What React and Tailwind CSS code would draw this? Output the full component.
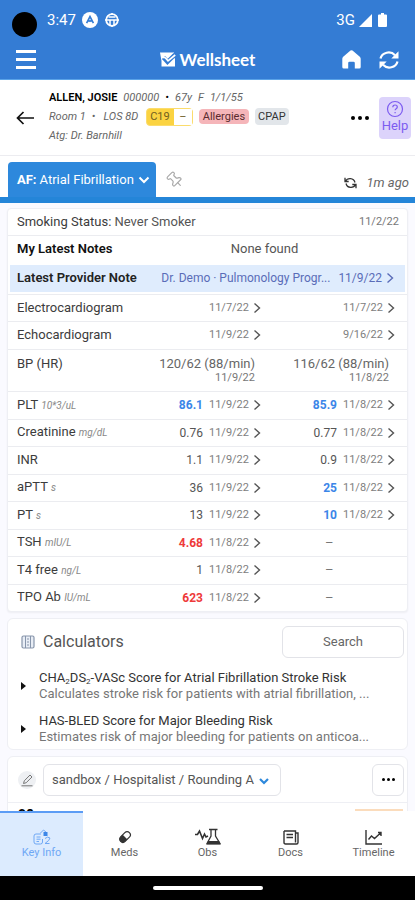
import { Pin } from "lucide-react";

const labs = [
  { name: "PLT", unit: "10*3/uL", a: ["86.1", "11/9/22", "low"], b: ["85.9", "11/8/22", "low"] },
  { name: "Creatinine", unit: "mg/dL", a: ["0.76", "11/9/22"], b: ["0.77", "11/8/22"] },
  { name: "INR", unit: "", a: ["1.1", "11/9/22"], b: ["0.9", "11/8/22"] },
  { name: "aPTT", unit: "s", a: ["36", "11/9/22"], b: ["25", "11/8/22", "low"] },
  { name: "PT", unit: "s", a: ["13", "11/9/22"], b: ["10", "11/8/22", "low"] },
  { name: "TSH", unit: "mIU/L", a: ["4.68", "11/8/22", "high"], b: null },
  { name: "T4 free", unit: "ng/L", a: ["1", "11/8/22"], b: null },
  { name: "TPO Ab", unit: "IU/mL", a: ["623", "11/8/22", "high"], b: null },
];

const calculators = [
  {
    title: (
      <>
        CHA<sub className="text-[8px]">2</sub>DS<sub className="text-[8px]">2</sub>-VASc Score for Atrial Fibrillation Stroke Risk
      </>
    ),
    text: "Calculates stroke risk for patients with atrial fibrillation, ...",
  },
  {
    title: "HAS-BLED Score for Major Bleeding Risk",
    text: "Estimates risk of major bleeding for patients on anticoa...",
  },
];

const flagColors = {
  low: "font-bold text-[#3b86e8]",
  high: "font-bold text-[#ee3a3a]",
};

function Chevron({ className = "" }) {
  return (
    <svg viewBox="0 0 8 12" className={`h-3 w-2 shrink-0 ${className}`} fill="none" stroke="currentColor" strokeWidth="1.4" aria-hidden="true">
      <path d="M1.5 1.5 6.5 6l-5 4.5" />
    </svg>
  );
}

function StatusBar() {
  return (
    <div className="flex h-10 items-center pl-3 pr-7">
      <span className="mt-2 size-[25px] rounded-full bg-black" />
      <span className="ml-2.5 text-[15px]">3:47</span>
      <svg viewBox="0 0 16 16" className="ml-1.5 size-4" aria-hidden="true">
        <circle cx="8" cy="8" r="8" fill="#fff" />
        <path d="M4.6 11.2 8 4.6l3.4 6.6M6.5 9.6 8 8.6l1.5 1" fill="none" stroke="#347cd4" strokeWidth="1.6" />
      </svg>
      <svg viewBox="0 0 16 16" className="ml-1.5 size-4" fill="none" stroke="#fff" aria-hidden="true">
        <circle cx="8" cy="8" r="5.8" strokeWidth="1.8" />
        <path d="M8 1v2M8 13v2M1 8h14M4.5 5h7M6 8v5M10 8v5" strokeWidth="1.5" />
      </svg>
      <span className="ml-auto text-[15px]">3G</span>
      <svg viewBox="0 0 13 13" className="ml-1 size-[13px]" fill="#fff" aria-hidden="true">
        <path d="M13 0v13H0z" />
      </svg>
      <svg viewBox="0 0 9 14" className="ml-1.5 h-3.5 w-[9px]" fill="#fff" aria-hidden="true">
        <path d="M3 0h3v1.5h2a1 1 0 0 1 1 1V13a1 1 0 0 1-1 1H1a1 1 0 0 1-1-1V2.5a1 1 0 0 1 1-1h2z" />
      </svg>
    </div>
  );
}

function TopBar() {
  return (
    <div className="grid h-[39px] grid-cols-[1fr_auto_1fr] items-center px-4">
      <button type="button" aria-label="Menu" className="flex w-5 flex-col gap-[5px]">
        <span className="h-[3px] bg-white" />
        <span className="h-[3px] bg-white" />
        <span className="h-[3px] bg-white" />
      </button>
      <div className="flex items-center gap-1">
        <svg viewBox="0 0 16 15" className="h-[15px] w-4" aria-hidden="true">
          <path d="M0 .5h14v4L15 7v7.500H1.500V9z" fill="#fff" />
          <path d="m3.500 5.500 4 4.500L15 2.500" fill="none" stroke="#347cd4" strokeWidth="4.200" />
          <path d="M3 5.800q1.800-1 3 .8L8 8.800 15.200 3" fill="none" stroke="#fff" strokeWidth="1.700" />
        </svg>
        <span className="font-[Lato] text-[17px] font-bold leading-5">Wellsheet</span>
      </div>
      <div className="flex items-center justify-end gap-[18px]">
        <button type="button" aria-label="Home">
          <svg viewBox="0 0 19 19" className="size-[19px]" aria-hidden="true">
            <path d="M8.500.6q1-.8 2 0l7.300 6.200q.9.8.9 2V17q0 1.500-1.500 1.500h-4.400V13q0-1.300-1.300-1.300h-4Q6.200 11.700 6.200 13v5.500H1.800Q.3 18.500.3 17V8.800q0-1.200.9-2z" fill="#fff" />
          </svg>
        </button>
        <button type="button" aria-label="Refresh">
          <svg viewBox="0 0 20 18" className="h-[18px] w-5" fill="none" stroke="#fff" strokeWidth="2.200" aria-hidden="true">
            <path d="M1.500 7.500A8.300 7.500 0 0 1 16 4.200M18.500 10.500A8.300 7.500 0 0 1 4 13.800" />
            <path d="M19.500.3v7.200h-7.200zM.5 17.700v-7.200h7.200z" fill="#fff" stroke="none" />
          </svg>
        </button>
      </div>
    </div>
  );
}

function PatientHeader() {
  return (
    <section className="flex h-[76px] shrink-0 items-center border-b border-[#ececf0] pl-4 pr-1">
      <button type="button" aria-label="Back">
        <svg viewBox="0 0 18 14" className="h-3.5 w-[18px]" fill="none" stroke="#111" strokeWidth="1.700" aria-hidden="true">
          <path d="M18 7H1.500M7.500 1l-6 6 6 6" />
        </svg>
      </button>
      <div className="mb-0.5 ml-[15px] text-[11px] italic leading-[19px] text-[#666]">
        <div className="flex whitespace-nowrap">
          <strong className="font-semibold not-italic text-black">ALLEN, JOSIE</strong>
          <span className="ml-1.5">000000</span>
          <span className="mx-1.5 text-black">•</span>
          <span>67y</span>
          <span className="ml-1.5">F</span>
          <span className="ml-1.5">1/1/55</span>
        </div>
        <div className="flex items-center whitespace-nowrap">
          <span>Room 1</span>
          <span className="ml-1.5">•</span>
          <span className="ml-2">LOS 8D</span>
          <span className="ml-2 flex h-[18px] items-center rounded-sm border border-[#fbdc6c] bg-[#fbd341] not-italic leading-4 text-[#70601f]">
            <span className="pl-[3px] pr-1">C19</span>
            <span className="flex h-4 w-[18px] items-center justify-center bg-white">–</span>
          </span>
          <span className="ml-1.5 rounded-sm bg-[#f5b5b9] px-1 not-italic leading-[15px] text-[#5a2a2e]">Allergies</span>
          <span className="ml-1.5 rounded-sm bg-[#e2e6ea] px-[3px] not-italic leading-[17px] text-[#333]">CPAP</span>
        </div>
        <p>Atg: Dr. Barnhill</p>
      </div>
      <button type="button" aria-label="More" className="ml-auto flex gap-[3px]">
        <span className="size-1 rounded-full bg-black" />
        <span className="size-1 rounded-full bg-black" />
        <span className="size-1 rounded-full bg-black" />
      </button>
      <button type="button" className="ml-2.5 flex h-[42px] w-8 flex-col items-center rounded bg-[#dcd3fb] pt-[3px] text-[13px] leading-4 text-[#7c5cf0]">
        <svg viewBox="0 0 18 18" className="size-[18px]" fill="none" stroke="currentColor" aria-hidden="true">
          <circle cx="9" cy="9" r="7.500" strokeWidth="1.200" />
          <path d="M6.800 7.200c0-3 4.500-2.800 4.500-.2 0 1.700-2.200 1.700-2.200 3.300M9.100 12v1.200" strokeWidth="1.200" />
        </svg>
        Help
      </button>
    </section>
  );
}

function ProblemTabs() {
  return (
    <nav className="flex h-[47px] shrink-0 items-end border-b-[6px] border-[#2485d8] pl-2 pr-1.5">
      <button type="button" className="flex h-[35px] w-[148px] items-center whitespace-nowrap rounded-t-sm bg-[#2d88dc] pl-[9px] text-[13px] text-white">
        <strong className="mr-[3px] font-bold">AF:</strong>
        Atrial Fibrillation
        <svg viewBox="0 0 12 8" className="ml-1 h-2 w-3 shrink-0" fill="none" stroke="currentColor" strokeWidth="2" aria-hidden="true">
          <path d="m1.500 1.500 4.500 4.500 4.500-4.500" />
        </svg>
      </button>
      <button type="button" aria-label="Pin" className="mb-2 ml-2.5">
        <Pin className="size-[18px] -rotate-45 text-[#aaa]" strokeWidth={1.6} />
      </button>
      <div className="mb-1 ml-auto flex items-center gap-2.5 text-[13px] italic leading-5 text-[#666]">
        <svg viewBox="0 0 13 12" className="h-3 w-[13px]" fill="none" stroke="#333" strokeWidth="1.300" aria-hidden="true">
          <path d="M1 .8v3.700h3.700M1.300 4.300C3.500.5 9.700.5 11 5.500M12 11.200V7.500H8.300M11.700 7.700C9.500 11.500 3.300 11.500 2 6.500" />
        </svg>
        1m ago
      </div>
    </nav>
  );
}

function ResultCell({ result, className = "" }) {
  if (!result) {
    return <td className="border-t border-[#ebecf0] pl-16 text-[#777]">–</td>;
  }
  const [value, date, flag] = result;
  return (
    <td className={`border-t border-[#ebecf0] ${className}`}>
      <a href="#result" className="flex items-center justify-end whitespace-nowrap leading-4">
        <span className={`text-[12px] ${flag ? flagColors[flag] : "text-[#555]"}`}>{value}</span>
        <span className="ml-1.5 w-10 text-right text-[11px] text-[#808080]">{date}</span>
        <Chevron className="ml-1 text-[#555]" />
      </a>
    </td>
  );
}

function SummaryTable() {
  return (
    <section className="rounded border border-[#eeeff4] bg-white shadow-xs">
      <table className="w-full table-fixed border-collapse text-[13px] leading-4 text-[#3c3c3c]">
        <colgroup>
          <col className="w-[126px]" />
          <col className="w-[127px]" />
          <col />
        </colgroup>
        <tbody>
          <tr className="h-[26px]">
            <td colSpan={2} className="pl-[9px] text-[#555]">
              <span className="text-[#3c3c3c]">Smoking Status:</span> Never Smoker
            </td>
            <td className="pr-2 text-right text-[11px] text-[#777]">11/2/22</td>
          </tr>
          <tr className="h-7 border-t border-[#ebecf0]">
            <th scope="row" className="whitespace-nowrap pl-[9px] text-left font-semibold text-[#111]">My Latest Notes</th>
            <td colSpan={2} className="pr-3 text-center text-[#555]">None found</td>
          </tr>
          <tr className="h-[31px]">
            <td colSpan={3} className="px-0.5">
              <a href="#note" className="flex h-[27px] items-center justify-between whitespace-nowrap bg-[#dfecfd] pl-[7px] pr-[11px] text-[12px] text-[#5a6cb8]">
                <strong className="text-[13px] font-semibold text-[#222]">Latest Provider Note</strong>
                <span className="flex items-center">
                  <span>Dr. Demo · Pulmonology Progr...</span>
                  <span className="ml-2">11/9/22</span>
                  <Chevron className="ml-1" />
                </span>
              </a>
            </td>
          </tr>
          {[
            ["Electrocardiogram", "11/7/22", "11/7/22"],
            ["Echocardiogram", "11/9/22", "9/16/22"],
          ].map(([name, first, second]) => (
            <tr key={name} className="h-7 even:h-[27px]">
              <th scope="row" className="border-t border-[#ebecf0] pl-[9px] text-left font-normal">{name}</th>
              <ResultCell result={["", first]} />
              <ResultCell result={["", second]} className="pr-3" />
            </tr>
          ))}
          <tr className="h-[42px] border-t border-[#ebecf0] align-top">
            <th scope="row" className="pl-[9px] pt-1.5 text-left font-normal">BP (HR)</th>
            <td className="whitespace-nowrap pr-1.5 pt-1.5 text-right text-[#666]">
              <div>120/62 (88/min)</div>
              <div className="text-[11px] leading-3 text-[#777]">11/9/22</div>
            </td>
            <td className="whitespace-nowrap pr-[18px] pt-1.5 text-right text-[#666]">
              <div>116/62 (88/min)</div>
              <div className="text-[11px] leading-3 text-[#777]">11/8/22</div>
            </td>
          </tr>
          {labs.map((lab) => (
            <tr key={lab.name} className="h-7 even:h-[27px]">
              <th scope="row" className="whitespace-nowrap border-t border-[#ebecf0] pl-[9px] text-left font-normal">
                {lab.name} <span className="text-[10px] italic text-[#888]">{lab.unit}</span>
              </th>
              <ResultCell result={lab.a} />
              <ResultCell result={lab.b} className="pr-3" />
            </tr>
          ))}
        </tbody>
      </table>
    </section>
  );
}

function Calculators() {
  return (
    <section className="rounded-md border border-[#eeeff4] bg-white pb-1 pl-3 pr-[3px] pt-[7px]">
      <div className="flex items-center">
        <svg viewBox="0 0 14 14" className="ml-px size-3.5" fill="none" stroke="#8795ab" aria-hidden="true">
          <rect x="1" y="1" width="12" height="12" rx="1.500" strokeWidth="1.200" fill="#e8edf5" />
          <path d="M4.500 1v12M9.500 1v12M6 4h2M6 7h2M6 10h2" />
        </svg>
        <h2 className="ml-2 text-base text-[#555]">Calculators</h2>
        <button type="button" className="ml-auto h-8 w-[122px] rounded-md border border-[#e2e3e8] text-[13px] text-[#666]">Search</button>
      </div>
      <ul className="mt-[11px] space-y-2.5">
        {calculators.map((calc, i) => (
          <li key={i} className="flex items-center">
            <svg viewBox="0 0 5 8" className="ml-px h-2 w-[5px] shrink-0" aria-hidden="true">
              <path d="M0 0l5 4-5 4z" fill="#111" />
            </svg>
            <div className="ml-[13px] whitespace-nowrap text-[13px] leading-4">
              <h3 className="leading-[17px] text-[#333]">{calc.title}</h3>
              <p className="text-[#777]">{calc.text}</p>
            </div>
          </li>
        ))}
      </ul>
    </section>
  );
}

function RoundingList() {
  return (
    <section className="rounded-md border border-[#eeeff4] bg-white">
      <div className="flex h-[46px] items-center border-b border-[#eeeff4] pl-2.5 pr-[3px]">
        <button type="button" aria-label="Edit" className="flex size-[18px] items-center justify-center rounded-full bg-[#eef0f3]">
          <svg viewBox="0 0 14 14" className="size-3.5" fill="none" stroke="#777" aria-hidden="true">
            <path d="M3.500 10.500l.8-2.700L10 2l2 2-5.800 5.700zM1.500 12.800h11" />
          </svg>
        </button>
        <div className="relative ml-[7px] w-[238px]">
          <select aria-label="List" className="h-8 w-full appearance-none rounded-md border border-[#e2e3e8] pl-2 text-[13px] text-[#555]">
            <option>sandbox / Hospitalist / Rounding A</option>
          </select>
          <svg viewBox="0 0 10 7" className="pointer-events-none absolute right-3 top-3.5 h-[7px] w-2.5" fill="none" stroke="#2d88dc" strokeWidth="2.200" aria-hidden="true">
            <path d="m1 1 4 4 4-4" />
          </svg>
        </div>
        <button type="button" aria-label="More" className="ml-auto flex size-8 items-center justify-center gap-0.5 rounded-md border border-[#e2e3e8]">
          <span className="size-[3px] rounded-full bg-black" />
          <span className="size-[3px] rounded-full bg-black" />
          <span className="size-[3px] rounded-full bg-black" />
        </button>
      </div>
      <div className="flex justify-between pl-2.5 pr-1 pt-1.5">
        <strong className="text-sm leading-3 text-black">28</strong>
        <span className="h-4 w-12 bg-[#fbdcbc]" />
      </div>
    </section>
  );
}

function KeyInfoIcon() {
  return (
    <svg viewBox="0 0 18 16" className="h-4 w-[18px]" fill="none" stroke="currentColor" aria-hidden="true">
      <path d="M8 5H3Q1 5 1 7v6q0 2 2 2h4.500q2 0 2-2v-3M3.500 8h4M3.500 10.200h4M3.500 12.500h2.500" />
      <path d="M7.500 4 10.500 1l3 2.500M12 9.500q2.500-2.500 5-.5 0 2-5 5.500h4.500" />
      <path d="M10.500 3h4v4h-4z" fill="#3b86e8" stroke="none" />
    </svg>
  );
}

function MedsIcon() {
  return (
    <svg viewBox="0 0 14 14" className="size-3.5" aria-hidden="true">
      <g transform="rotate(45 7 7)">
        <rect x="3.800" y="0.800" width="6.400" height="12.400" rx="3.200" fill="none" stroke="currentColor" strokeWidth="1.200" />
        <path d="M3.800 7h6.400v3a3.200 3.200 0 0 1-6.400 0z" fill="currentColor" />
      </g>
    </svg>
  );
}

function ObsIcon() {
  return (
    <svg viewBox="0 0 26 18" className="h-[18px] w-[26px]" fill="none" stroke="currentColor" aria-hidden="true">
      <path d="M0 6.500h2.500L4.500 3l3 7.500L9.500 6l1.500 3 2-1" strokeWidth="1.600" />
      <path d="M14 1.500h8.500M16 2v6l-4 7.500h13L20.500 8V2" strokeWidth="1.300" />
      <path d="M13 13h11.200l1.300 3.500H11.500z" fill="currentColor" stroke="none" />
    </svg>
  );
}

function DocsIcon() {
  return (
    <svg viewBox="0 0 16 15" className="h-[15px] w-4" fill="none" stroke="currentColor" strokeWidth="1.400" aria-hidden="true">
      <path d="M1 1h11.500v11.500M12.500 3H15v9.500q0 1.500-1.500 1.500H2.500Q1 14 1 12.500V1M3.500 4.500h6.500M3.500 7.500h6.500" />
    </svg>
  );
}

function TimelineIcon() {
  return (
    <svg viewBox="0 0 17 15" className="h-[15px] w-[17px]" fill="none" stroke="currentColor" strokeWidth="1.400" aria-hidden="true">
      <path d="M1 0v14h16M3.500 9.500l3-3.500 3 2.500 6-5.500M16 6V2.500h-3" />
    </svg>
  );
}

const tabs = [
  { label: "Key Info", Icon: KeyInfoIcon, active: true },
  { label: "Meds", Icon: MedsIcon },
  { label: "Obs", Icon: ObsIcon },
  { label: "Docs", Icon: DocsIcon },
  { label: "Timeline", Icon: TimelineIcon },
];

function BottomNav() {
  return (
    <nav className="grid h-[65px] shrink-0 grid-cols-5 bg-white text-[11px] leading-3">
      {tabs.map(({ label, Icon, active }) => (
        <a
          key={label}
          href="#tab"
          className={`flex flex-col items-center border-t-2 pt-[15px] ${
            active ? "border-[#5b9cf5] bg-[#dcebfe] text-[#6fa8f5]" : "border-transparent text-[#333]"
          }`}
        >
          <span className="mb-px flex h-[18px] items-center">
            <Icon />
          </span>
          <span className={active ? "" : "text-[#666]"}>{label}</span>
        </a>
      ))}
    </nav>
  );
}

function App() {
  return (
    <div className="flex h-screen flex-col overflow-hidden bg-white font-[Roboto,sans-serif]">
      <header className="shrink-0 border-b border-[#5aa3e8] bg-[#347cd4] text-white">
        <StatusBar />
        <TopBar />
      </header>
      <PatientHeader />
      <ProblemTabs />
      <main className="min-h-0 flex-1 space-y-1.5 overflow-hidden bg-[#fafaff] px-[7px] pt-[5px]">
        <SummaryTable />
        <Calculators />
        <RoundingList />
      </main>
      <BottomNav />
      <div className="flex h-6 shrink-0 items-center justify-center bg-black">
        <span className="h-1 w-[110px] rounded-full bg-white" />
      </div>
    </div>
  );
}

export default App;
